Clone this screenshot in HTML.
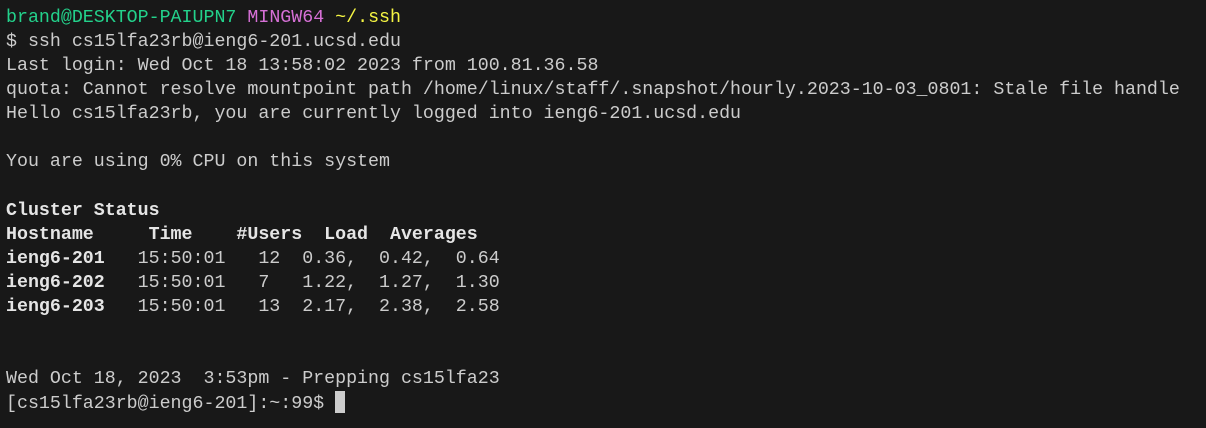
<!DOCTYPE html>
<html><head><style>
html,body{margin:0;padding:0;background:#181818;width:1206px;height:428px;overflow:hidden}
pre{margin:0;position:absolute;left:6px;top:6px;font-family:"Liberation Mono",monospace;font-size:18.3px;line-height:24.07px;color:#cccccc}
.g{color:#23d18b}.m{color:#d670d6}.y{color:#f5f543}b{font-weight:bold;color:#e5e5e5}
.c{display:inline-block;width:10px;height:22px;background:#cccccc;vertical-align:-5px}
</style></head><body><pre><span class="g">brand@DESKTOP-PAIUPN7</span> <span class="m">MINGW64</span> <span class="y">~/.ssh</span>
$ ssh cs15lfa23rb@ieng6-201.ucsd.edu
Last login: Wed Oct 18 13:58:02 2023 from 100.81.36.58
quota: Cannot resolve mountpoint path /home/linux/staff/.snapshot/hourly.2023-10-03_0801: Stale file handle
Hello cs15lfa23rb, you are currently logged into ieng6-201.ucsd.edu

You are using 0% CPU on this system

<b>Cluster Status</b>
<b>Hostname     Time    #Users  Load  Averages</b>
<b>ieng6-201</b>   15:50:01   12  0.36,  0.42,  0.64
<b>ieng6-202</b>   15:50:01   7   1.22,  1.27,  1.30
<b>ieng6-203</b>   15:50:01   13  2.17,  2.38,  2.58


Wed Oct 18, 2023  3:53pm - Prepping cs15lfa23
[cs15lfa23rb@ieng6-201]:~:99$ <span class="c"></span></pre></body></html>
